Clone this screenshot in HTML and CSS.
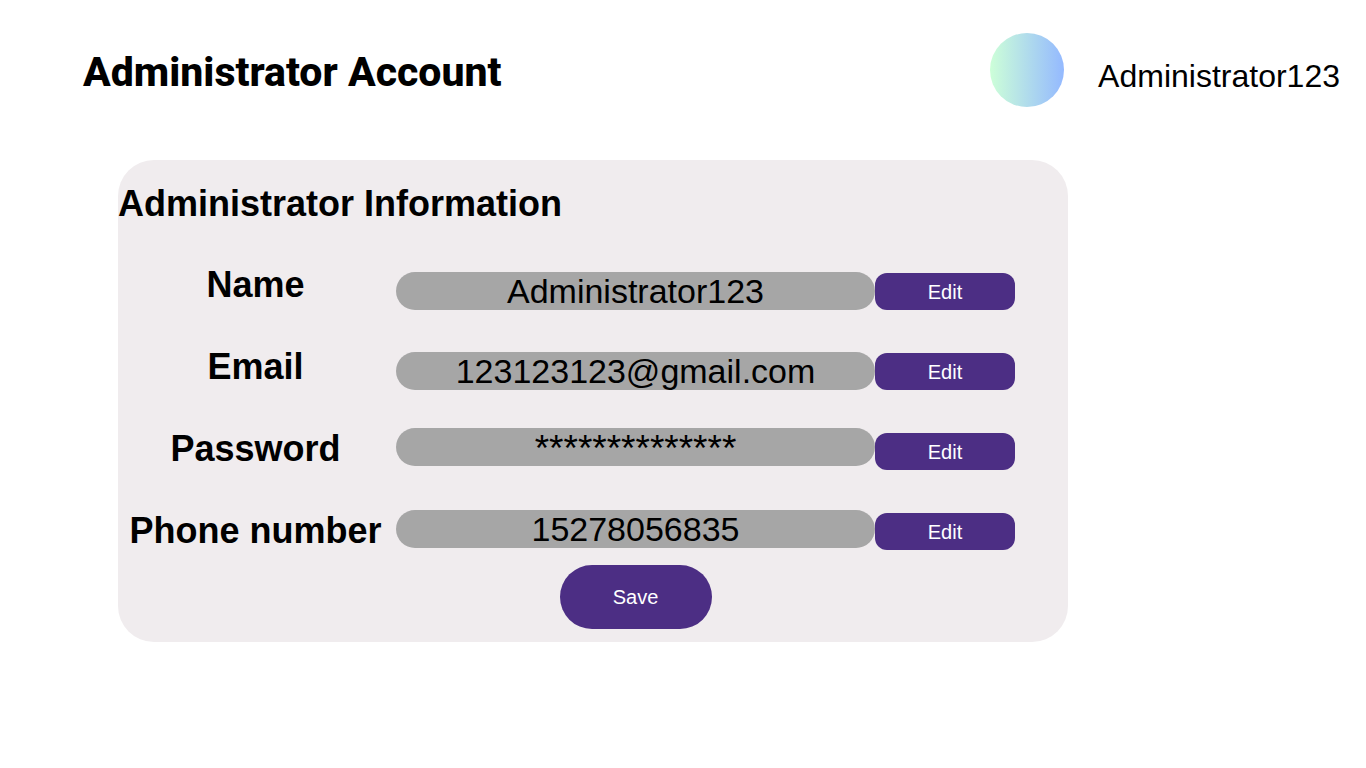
FILE: index.html
```html
<!DOCTYPE html>
<html lang="en">
<head>
<meta charset="utf-8">
<title>Administrator Account</title>
<link rel="stylesheet" href="styles.css">
</head>
<body>
<header class="top">
  <h1 class="title">Administrator Account</h1>
  <div class="user">
    <span class="avatar"></span>
    <span class="username">Administrator123</span>
  </div>
</header>
<main class="content">
  <form class="card">
    <h2 class="heading">Administrator Information</h2>
    <div class="columns">
      <div class="labels">
        <label for="name">Name</label>
        <label for="email">Email</label>
        <label for="password">Password</label>
        <label for="phone">Phone number</label>
      </div>
      <div class="fields">
        <input class="field" id="name" type="text" value="Administrator123">
        <input class="field" id="email" type="text" value="123123123@gmail.com">
        <input class="field field-password" id="password" type="text" value="**************">
        <input class="field" id="phone" type="text" value="15278056835">
        <button class="save" type="button">Save</button>
      </div>
      <div class="edits">
        <button class="edit" type="button" aria-label="Edit name">Edit</button>
        <button class="edit" type="button" aria-label="Edit email">Edit</button>
        <button class="edit" type="button" aria-label="Edit password">Edit</button>
        <button class="edit" type="button" aria-label="Edit phone number">Edit</button>
      </div>
    </div>
  </form>
</main>
</body>
</html>
```
FILE: styles.css
```css
* { box-sizing: border-box; }
body {
  margin: 0;
  background: #fff;
  color: #000;
  font-family: "Liberation Sans", Arial, sans-serif;
}
.top {
  display: flex;
  justify-content: space-between;
  align-items: center;
  padding: 33px 26px 0 83px;
}
.title {
  margin: 0;
  padding-top: 4px;
  font: 800 41px/70px Roboto, sans-serif;
}
.user { display: flex; align-items: center; gap: 34px; }
.avatar {
  width: 74px;
  height: 74px;
  border-radius: 50%;
  background: linear-gradient(90deg, #cdffd8, #94b9ff);
}
.username { padding-top: 12px; font-size: 32px; line-height: 40px; }
.content { padding: 53px 298px 0 118px; }
.card {
  padding: 20px 0 13px;
  border-radius: 36px;
  background: #f0ecee;
}
.heading { margin: 0; font-size: 36px; line-height: 48px; font-weight: 700; }
.columns {
  display: grid;
  grid-template-columns: 278px 1fr 140px;
  align-items: start;
  padding: 37px 53px 0 0;
}
.labels {
  display: flex;
  flex-direction: column;
  gap: 42px;
  padding-right: 3px;
  font-size: 36px;
  line-height: 40px;
  font-weight: 700;
  text-align: center;
}
.fields { display: flex; flex-direction: column; padding-top: 7px; }
.field {
  width: 100%;
  height: 38px;
  margin-bottom: 42px;
  padding: 0;
  border: 0;
  border-radius: 19px;
  background: #a6a6a6;
  color: #000;
  font: 34px/38px "Liberation Sans", Arial, sans-serif;
  text-align: center;
}
.field-password { margin-top: -4px; margin-bottom: 44px; padding-top: 4px; font-size: 37px; }
.field:last-of-type { margin-bottom: 17px; }
.edits { display: grid; gap: 43px; padding-top: 8px; }
.edit, .save {
  padding: 0;
  border: 0;
  background: #4c2e84;
  color: #fff;
  font: 20px/24px "Liberation Sans", Arial, sans-serif;
}
.edit { height: 37px; border-radius: 12px; }
.save { align-self: center; width: 152px; height: 64px; border-radius: 32px; }
```
